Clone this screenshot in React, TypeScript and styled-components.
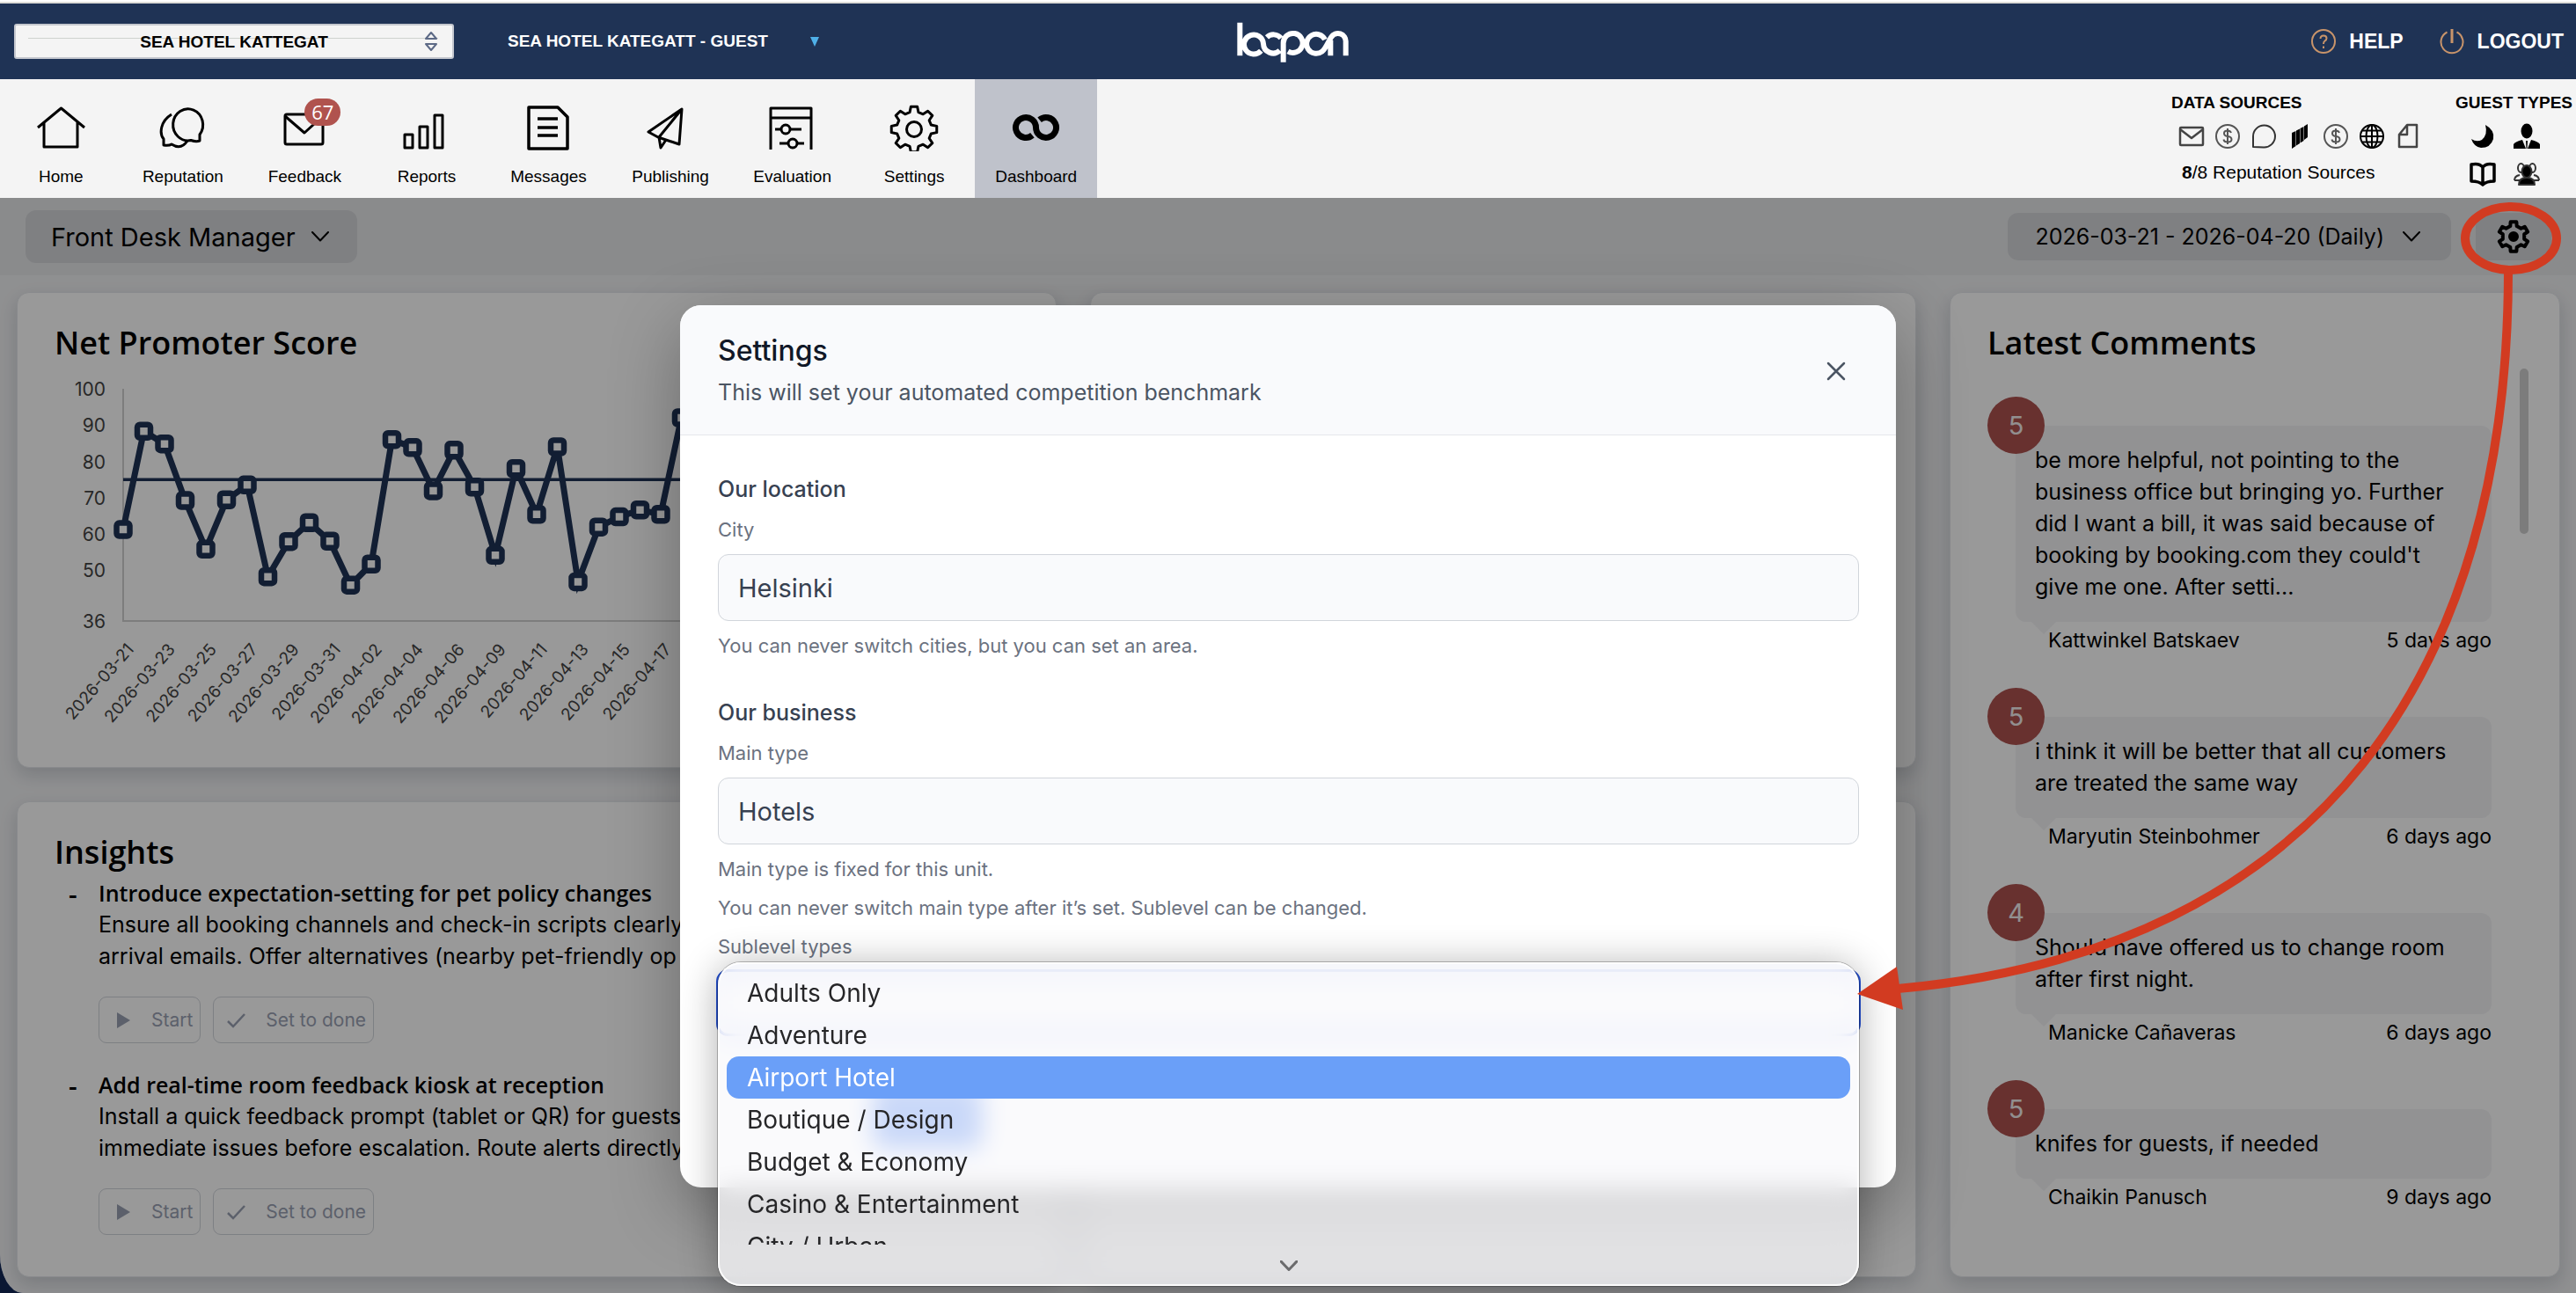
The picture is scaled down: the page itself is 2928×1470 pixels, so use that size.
import React from "react";
import styled, { createGlobalStyle } from "styled-components";

const GlobalStyle = createGlobalStyle`
  *, *::before, *::after { box-sizing: border-box; }
  body { margin: 0; background: #0a1733; }
  button, input, select { font: inherit; color: inherit; margin: 0; }
  h1, h2, h3, p, ul, ol { margin: 0; padding: 0; }
  ul, ol { list-style: none; }
`;

const ui = `Inter, "Liberation Sans", sans-serif`;
const heading = `"Open Sans", "Noto Sans", sans-serif`;
const legacy = `"Liberation Sans", Arial, sans-serif`;

const Page = styled.div`
  position: relative;
  display: flex;
  flex-direction: column;
  min-height: 100vh;
  overflow: hidden;
  font-family: ${ui};
  color: #000;
`;

/* ---------- top bar ---------- */

const TopBar = styled.header`
  display: grid;
  grid-template-columns: 1fr auto 1fr;
  align-items: center;
  height: 90px;
  padding: 4px 14px 0 16px;
  font-family: ${legacy};
  font-weight: 700;
  color: #fff;
  background: linear-gradient(#fff 2px, #deded9 2px, #deded9 4px, #1f3355 4px);
`;

const TopGroup = styled.div<{ $end?: boolean }>`
  display: flex;
  align-items: center;
  justify-content: ${(p) => (p.$end ? "flex-end" : "flex-start")};
  gap: ${(p) => (p.$end ? 40 : 61)}px;
`;

const HotelPicker = styled.label`
  position: relative;
  display: block;
  width: 500px;
  height: 40px;
  svg { position: absolute; right: 18px; top: 8px; pointer-events: none; }
`;

const HotelSelect = styled.select`
  appearance: none;
  width: 100%;
  height: 100%;
  padding: 0;
  border: 2px solid #c5c8cf;
  border-radius: 3px;
  color: #000;
  font-size: 19px;
  text-align: center;
  text-align-last: center;
  background: linear-gradient(#cfd2cf, #cfd2cf) 14px 14px / 466px 1px no-repeat #f4f4f4;
`;

const UnitButton = styled.button`
  display: flex;
  align-items: center;
  gap: 48px;
  padding: 0;
  border: 0;
  background: none;
  font-size: 19px;
  font-weight: 700;
`;

const TopLink = styled.a`
  display: flex;
  align-items: center;
  gap: 14px;
  color: #fff;
  font-size: 23px;
  text-decoration: none;
`;

/* ---------- navigation ---------- */

const NavBar = styled.div`
  display: flex;
  justify-content: space-between;
  height: 135px;
  font-family: ${legacy};
  background: #f4f4f4;
`;

const NavList = styled.nav`
  display: grid;
  grid-template-columns: repeat(9, 1fr);
  width: 1247px;
`;

const NavItem = styled.a<{ $active?: boolean }>`
  display: flex;
  flex-direction: column;
  align-items: center;
  gap: 17px;
  padding-top: 28px;
  font-size: 19px;
  line-height: 24px;
  color: #000;
  text-decoration: none;
  background: ${(p) => (p.$active ? "#bfc2cb" : "transparent")};
`;

const NavIcon = styled.span`
  position: relative;
  display: block;
  width: 56px;
  height: 54px;
`;

const NavBadge = styled.span`
  position: absolute;
  top: -6px;
  left: 28px;
  width: 41px;
  height: 31px;
  border-radius: 16px;
  font: 500 22px/31px ${heading};
  text-align: center;
  color: #fff;
  background: #b0534e;
`;

const NavInfo = styled.div`
  display: flex;
  justify-content: space-between;
  width: 460px;
  padding: 15px 4px 0 0;
`;

const InfoTitle = styled.h2`
  font-size: 19px;
  font-weight: 700;
  line-height: 24px;
  white-space: nowrap;
`;

const SourceIcons = styled.div`
  display: flex;
  gap: 9px;
  padding: 10px 0 13px 7px;
`;

const SourceText = styled.p`
  padding-left: 12px;
  font-size: 21px;
  line-height: 24px;
`;

const GuestIcons = styled.div`
  display: grid;
  grid-template-columns: 32px 32px;
  gap: 11px 18px;
  padding: 10px 0 0 15px;
`;

/* ---------- dashboard ---------- */

const Main = styled.main`
  position: relative;
  display: flex;
  flex: 1;
  flex-direction: column;
  overflow: hidden;
  background: #eff0f2;
  border-bottom-left-radius: 26px 44px;
`;

const Toolbar = styled.div`
  display: flex;
  align-items: center;
  justify-content: space-between;
  height: 88px;
  padding: 0 28px 0 29px;
  background: #e6e8e9;
`;

const ToolGroup = styled.div`
  display: flex;
  gap: 28px;
`;

const ToolButton = styled.button<{ $large?: boolean; $icon?: boolean }>`
  display: flex;
  align-items: center;
  justify-content: center;
  gap: ${(p) => (p.$large ? 18 : 21)}px;
  height: ${(p) => (p.$large ? 60 : 54)}px;
  padding: ${(p) => (p.$icon ? "0 24px" : p.$large ? "0 32px 0 29px" : "0 35px 0 31px")};
  border: 0;
  border-radius: 12px;
  font-size: ${(p) => (p.$large ? 29 : 25)}px;
  color: #000;
  background: #d4d5d9;
`;

const Cards = styled.div`
  display: grid;
  flex: 1;
  grid-template-columns: 1182fr 939fr 694fr;
  grid-template-rows: 1fr 1fr;
  gap: 38px;
  padding: 19px 18px 18px 19px;
`;

const Card = styled.section<{ $tall?: boolean }>`
  grid-row: ${(p) => (p.$tall ? "1 / span 2" : "auto")};
  grid-column: ${(p) => (p.$tall ? "3" : "auto")};
  padding: 33px 35px 0 42px;
  border: 1px solid #e5e7eb;
  border-radius: 14px;
  background: #fff;
  box-shadow: 0 8px 20px rgba(15, 23, 42, 0.16);
`;

const CardTitle = styled.h2`
  font: 600 36px/48px ${heading};
`;

const InsightList = styled.ul`
  display: grid;
  gap: 29px;
  padding-top: 4px;
`;

const Insight = styled.li`
  display: grid;
  grid-template-columns: 34px 1fr;
  padding-left: 16px;
  font-size: 25px;
  line-height: 36px;
  white-space: nowrap;
`;

const InsightMark = styled.span`
  font: 600 30px/40px ${heading};
`;

const InsightTitle = styled.h3`
  font: 600 25px/36px ${heading};
`;

const InsightActions = styled.div`
  display: flex;
  gap: 14px;
  padding-top: 28px;
`;

const ActionButton = styled.button`
  display: flex;
  align-items: center;
  gap: 19px;
  height: 53px;
  padding: 0 8px 0 14px;
  border: 1px solid #d1d5db;
  border-radius: 9px;
  font-size: 21px;
  color: #99a1b3;
  background: none;
`;

const CommentScroll = styled.div`
  display: flex;
  align-items: flex-start;
  justify-content: space-between;
  padding-top: 5px;
`;

const ScrollThumb = styled.div`
  width: 10px;
  height: 188px;
  border-radius: 5px;
  background: #cfcfcf;
`;

const CommentList = styled.ol`
  flex: 1;
  max-width: 573px;
  padding-top: 65px;
`;

const Comment = styled.li`
  position: relative;
  padding: 0 0 36px 32px;
`;

const Score = styled.span`
  position: absolute;
  top: -33px;
  left: 0;
  width: 65px;
  height: 65px;
  border-radius: 50%;
  font-size: 29px;
  line-height: 65px;
  text-align: center;
  color: #f4eeee;
  background: #ad524f;
`;

const Bubble = styled.p`
  position: relative;
  padding: 21px 44px 22px 22px;
  border-radius: 12px;
  font-size: 25px;
  line-height: 36px;
  background: #f3f3f6;
  &::after {
    content: "";
    position: absolute;
    left: 18px;
    top: 100%;
    border: 14px solid transparent;
    border-bottom: 0;
    border-top-color: #f3f3f6;
  }
`;

const CommentMeta = styled.div`
  display: flex;
  justify-content: space-between;
  height: 72px;
  padding: 3px 0 0 37px;
  font-size: 23px;
  line-height: 36px;
`;

/* ---------- modal ---------- */

const Overlay = styled.div`
  position: absolute;
  inset: 225px 0 0;
  z-index: 2;
  display: flex;
  align-items: center;
  justify-content: center;
  padding-top: 2px;
  background: rgba(0, 0, 0, 0.4);
  border-bottom-left-radius: 26px 44px;
`;

const Modal = styled.div`
  width: 100%;
  max-width: 1382px;
  border-radius: 24px;
  background: #fff;
  box-shadow: 0 25px 80px rgba(0, 0, 0, 0.3);
`;

const ModalHeader = styled.div`
  display: flex;
  align-items: center;
  justify-content: space-between;
  padding: 32px 55px 30px 43px;
  border-bottom: 1px solid #e5e7eb;
  border-radius: 24px 24px 0 0;
  background: #f9fafc;
`;

const ModalHeadings = styled.div`
  display: grid;
  gap: 9px;
`;

const ModalTitle = styled.h1`
  font-size: 32px;
  font-weight: 500;
  line-height: 40px;
  color: #111827;
`;

const ModalText = styled.p`
  font-size: 25px;
  line-height: 36px;
  color: #4b5563;
`;

const CloseButton = styled.button`
  display: flex;
  padding: 0;
  border: 0;
  color: #4b5563;
  background: none;
`;

const ModalBody = styled.form`
  display: grid;
  gap: 42px;
  padding: 43px 42px 174px 43px;
`;

const FieldSet = styled.div`
  display: grid;
  gap: 12px;
`;

const FieldTitle = styled.h2`
  font-size: 25px;
  font-weight: 500;
  line-height: 36px;
  color: #374151;
`;

const Label = styled.label`
  font-size: 22px;
  line-height: 32px;
  color: #6b7280;
`;

const Hint = styled.p`
  font-size: 22px;
  line-height: 32px;
  color: #6b7280;
`;

const TextField = styled.input`
  width: 100%;
  height: 76px;
  padding: 0 22px;
  border: 1px solid #d1d5db;
  border-radius: 12px;
  font-size: 29px;
  color: #374151;
  background: #f9fafc;
`;

const PickerWrap = styled.div`
  position: relative;
`;

const SublevelSelect = styled.select`
  appearance: none;
  display: block;
  width: 100%;
  height: 72px;
  padding: 0 22px;
  border: 1px solid #2451d6;
  border-radius: 12px;
  outline: 2px solid #2451d6;
  background: #fff;
`;

const SaveShape = styled.div`
  position: absolute;
  top: 128px;
  left: 176px;
  width: 124px;
  height: 74px;
  border-radius: 12px;
  background: #2b6bf0;
`;

const Popup = styled.div`
  position: absolute;
  top: -10px;
  left: 0;
  right: 0;
  padding: 11px 10px 0;
  border-radius: 26px;
  background: rgba(248, 248, 251, 0.77);
  backdrop-filter: blur(14px);
  box-shadow: 0 0 0 1px rgba(0, 0, 0, 0.25), inset 0 0 0 2px rgba(255, 255, 255, 0.85),
    0 4px 44px rgba(0, 0, 0, 0.32);
`;

const Options = styled.ul`
  height: 310px;
  overflow: hidden;
`;

const Option = styled.li<{ $active?: boolean }>`
  padding-left: 23px;
  border-radius: 14px;
  font-size: 28px;
  line-height: 48px;
  color: ${(p) => (p.$active ? "#fff" : "#262628")};
  background: ${(p) => (p.$active ? "#6a9ff8" : "transparent")};
`;

const MoreRow = styled.div`
  display: flex;
  align-items: center;
  justify-content: center;
  height: 47px;
  color: #6b6b6d;
`;

const Annotation = styled.svg`
  position: absolute;
  top: 225px;
  right: 0;
  z-index: 3;
  pointer-events: none;
`;

/* ---------- drawings ---------- */

const gearPath = (c: number, outer: number, inner: number, teeth: number, top: number, base: number) => {
  const pts: string[] = [];
  for (let i = 0; i < teeth; i++) {
    const mid = (i / teeth) * Math.PI * 2 - Math.PI / 2;
    [[-base, inner], [-top, outer], [top, outer], [base, inner]].forEach(([a, r]) =>
      pts.push(`${(c + Math.cos(mid + a) * r).toFixed(2)} ${(c + Math.sin(mid + a) * r).toFixed(2)}`)
    );
  }
  return `M${pts.join("L")}Z`;
};

const Draw = ({ children, w = 56, h = 54, sw = 3 }: { children: React.ReactNode; w?: number; h?: number; sw?: number }) => (
  <svg width={w} height={h} viewBox={`0 0 ${w} ${h}`} fill="none" stroke="currentColor" strokeWidth={sw}
    strokeLinejoin="round" aria-hidden="true">
    {children}
  </svg>
);

const Chevron = ({ w = 20, sw = 2 }: { w?: number; sw?: number }) => (
  <svg width={w} height="12" viewBox="0 0 20 12" fill="none" stroke="currentColor" strokeWidth={sw}
    strokeLinecap="round" strokeLinejoin="round" aria-hidden="true">
    <path d="M1 1L10 10.500L19 1" />
  </svg>
);

const Logo = () => (
  <svg width="160" height="80" viewBox="-13 -8 480 240" fill="none" stroke="#fff" strokeWidth="18" role="img" aria-label="loopon">
    <path d="M60 48V161M132 144A33 33 0 1 1 140 120A33 33 0 0 0 196 143M152 98A33 33 0 0 1 200 101M208 183V118A33 33 0 1 1 224 146M350 106A33 33 0 1 0 340 147C352 138 362 112 371 98A27 27 0 0 1 421 114V161M369 161V108" />
  </svg>
);

const navItems: { label: string; icon: React.ReactNode; badge?: string; active?: boolean }[] = [
  { label: "Home", icon: <Draw><path d="M2 27L28.500 5L55 27M9 21V49H47V21" /></Draw> },
  {
    label: "Reputation",
    icon: <Draw><path d="M47 42V35A17 18 0 1 0 37 41.500Q43 43.500 47 42Z" /><path d="M15 12C2 20 1 34 6 40V47Q12 48 15 46Q26 53 33 42" /></Draw>,
  },
  { label: "Feedback", badge: "67", icon: <Draw><rect x="6" y="12" width="43" height="34" rx="2" /><path d="M6 14L28 33L49 14" /></Draw> },
  {
    label: "Reports",
    icon: <Draw><rect x="3" y="35" width="9" height="15" /><rect x="20" y="26" width="9" height="24" /><rect x="37" y="13" width="9" height="37" /></Draw>,
  },
  { label: "Messages", icon: <Draw sw={3.5}><path d="M6 4H39L50 15V51H6ZM16 17H39M16 27H39M16 36H39" /></Draw> },
  { label: "Publishing", icon: <Draw><path d="M41 6L3 32L14 38L38 46ZM41 6L15 38L17 50L23 41" /></Draw> },
  {
    label: "Evaluation",
    icon: <Draw><path d="M3 52V5H49V52M3 16H49M8 29H15M25 29H38M13 45H23M33 45H41" /><circle cx="20" cy="29" r="5" /><circle cx="28" cy="45" r="5" /></Draw>,
  },
  {
    label: "Settings",
    icon: <Draw><path d={gearPath(28, 26, 20, 8, 0.14, 0.25)} transform="translate(0 1)" /><circle cx="28" cy="29" r="8.500" /></Draw>,
  },
  {
    label: "Dashboard",
    active: true,
    icon: <Draw sw={7}><path d="M23.400 35.800A11.500 11.500 0 1 1 27.500 27A11.500 11.500 0 1 0 31.600 18.200" /></Draw>,
  },
];

const Small = ({ children, sw = 2, color = "#333" }: { children: React.ReactNode; sw?: number; color?: string }) => (
  <svg width="32" height="32" viewBox="0 0 32 32" fill="none" stroke={color} strokeWidth={sw} strokeLinejoin="round" aria-hidden="true">
    {children}
  </svg>
);

const Dollar = () => (
  <Small sw={2} color="#555">
    <circle cx="16" cy="16" r="13" />
    <path d="M20 12Q19 9.500 16 9.500Q12 9.500 12 12.500Q12 15.500 16 16Q20.500 16.500 20.500 19.500Q20.500 22.500 16 22.500Q12 22.500 11.500 19.500M16 7V25" />
  </Small>
);

const ChartLayout = { left: 140, step: 23.5, top: 442, bottom: 706 };
const scores = [
  61.2, 88.3, 84.8, 69.2, 55.8, 69.4, 73.5, 48.2, 57.9, 63.1, 58, 45.9, 51.7, 86, 83.8, 71.9, 83.1, 72.9, 54.1, 78,
  65.4, 84, 46.8, 61.9, 64.7, 66.6, 65.4, 92, 88, 84,
];
const chartDates = [
  "2026-03-21", "2026-03-23", "2026-03-25", "2026-03-27", "2026-03-29", "2026-03-31", "2026-04-02", "2026-04-04",
  "2026-04-06", "2026-04-09", "2026-04-11", "2026-04-13", "2026-04-15", "2026-04-17",
];
const px = (i: number) => ChartLayout.left + i * ChartLayout.step;
const py = (v: number) => ChartLayout.top + ((100 - v) / 64) * (ChartLayout.bottom - ChartLayout.top);

const ChartSvg = styled.svg`
  display: block;
  font-family: ${ui};
  fill: #444;
`;

const ValueLabel = styled.text`
  font-size: 21px;
`;

const DateLabel = styled.text`
  font-size: 19px;
`;

const NpsChart = () => (
  <ChartSvg width="1060" height="430" viewBox="62 414 1060 430" role="img" aria-label="Net Promoter Score by day">
    <path d="M140 442V706H1120" fill="none" stroke="#d0d0d0" strokeWidth="2" />
    <path d={`M140 ${py(75)}H1120`} stroke="#1f3355" strokeWidth="3.500" />
    {[100, 90, 80, 70, 60, 50, 36].map((v) => (
      <ValueLabel key={v} x="120" y={py(v) + 8} textAnchor="end">{v}</ValueLabel>
    ))}
    {chartDates.map((d, i) => (
      <DateLabel key={d} textAnchor="end" transform={`translate(${px(i * 2) + 13} 739) rotate(-49)`}>{d}</DateLabel>
    ))}
    <polyline points={scores.map((v, i) => `${px(i)},${py(v)}`).join(" ")} fill="none" stroke="#1f3355" strokeWidth="7" />
    {scores.map((v, i) => (
      <rect key={i} x={px(i) - 7.5} y={py(v) - 7.5} width="15" height="15" rx="3" fill="#fff" stroke="#1f3355" strokeWidth="6.500" />
    ))}
  </ChartSvg>
);

const insights = [
  {
    title: "Introduce expectation-setting for pet policy changes",
    lines: ["Ensure all booking channels and check-in scripts clearly", "arrival emails. Offer alternatives (nearby pet-friendly op"],
  },
  {
    title: "Add real-time room feedback kiosk at reception",
    lines: ["Install a quick feedback prompt (tablet or QR) for guests", "immediate issues before escalation. Route alerts directly"],
  },
];

const comments = [
  {
    score: 5,
    text: "be more helpful, not pointing to the business office but bringing yo. Further did I want a bill, it was said because of booking by booking.com they could't give me one. After setti...",
    name: "Kattwinkel Batskaev",
    when: "5 days ago",
  },
  { score: 5, text: "i think it will be better that all customers are treated the same way", name: "Maryutin Steinbohmer", when: "6 days ago" },
  { score: 4, text: "Should have offered us to change room after first night.", name: "Manicke Cañaveras", when: "6 days ago" },
  { score: 5, text: "knifes for guests, if needed", name: "Chaikin Panusch", when: "9 days ago" },
];

const sublevels = [
  "Adults Only", "Adventure", "Airport Hotel", "Boutique / Design", "Budget & Economy", "Casino & Entertainment", "City / Urban",
];

export default function App() {
  return (
    <Page>
      <GlobalStyle />
      <TopBar>
        <TopGroup>
          <HotelPicker>
            <HotelSelect aria-label="Hotel">
              <option>SEA HOTEL KATTEGAT</option>
            </HotelSelect>
            <svg width="16" height="24" viewBox="0 0 16 24" fill="none" stroke="#5d6a86" strokeWidth="2" strokeLinejoin="round" aria-hidden="true">
              <path d="M8 2L14 9H2ZM8 22L14 15H2Z" />
            </svg>
          </HotelPicker>
          <UnitButton type="button">
            SEA HOTEL KATEGATT - GUEST
            <svg width="10" height="11" viewBox="0 0 10 11" aria-hidden="true"><path d="M0 0H10L5 11Z" fill="#4fb0e8" /></svg>
          </UnitButton>
        </TopGroup>
        <Logo />
        <TopGroup $end>
          <TopLink href="#help">
            <svg width="30" height="30" viewBox="0 0 30 30" fill="none" stroke="#c8946a" strokeWidth="2" aria-hidden="true">
              <circle cx="15" cy="15" r="13" />
              <path d="M11.500 12Q11.500 8.500 15 8.500Q18.500 8.500 18.500 11.500Q18.500 13.500 16.500 14.500Q15 15.500 15 18M15 20.500V23" />
            </svg>
            HELP
          </TopLink>
          <TopLink href="#logout">
            <svg width="30" height="30" viewBox="0 0 30 30" fill="none" stroke="#c8946a" strokeWidth="2" aria-hidden="true">
              <path d="M9.500 4.500A12.500 12.500 0 1 0 20.500 4.500" />
              <path d="M15 1V17" strokeWidth="3" />
            </svg>
            LOGOUT
          </TopLink>
        </TopGroup>
      </TopBar>

      <NavBar>
        <NavList>
          {navItems.map((n) => (
            <NavItem key={n.label} href={`#${n.label.toLowerCase()}`} $active={n.active}>
              <NavIcon>
                {n.icon}
                {n.badge && <NavBadge>{n.badge}</NavBadge>}
              </NavIcon>
              {n.label}
            </NavItem>
          ))}
        </NavList>
        <NavInfo>
          <div>
            <InfoTitle>DATA SOURCES</InfoTitle>
            <SourceIcons>
              <Small sw={2.5} color="#444"><rect x="3" y="6" width="26" height="20" rx="1" /><path d="M3 8L16 18L29 8" /></Small>
              <Dollar />
              <Small color="#333"><path d="M4 28V16A12.500 12.500 0 1 1 16 28.500Z" /></Small>
              <Small color="none">
                <path d="M7 12L11.500 10V27L7 30ZM12 9.500L16 7.500V24L12 26.500ZM16.500 7L20.500 5V21L16.500 23.500ZM21 4.500L25 2V17L21 20Z" fill="#000" />
              </Small>
              <Dollar />
              <Small color="#000">
                <circle cx="16" cy="16" r="13" /><ellipse cx="16" cy="16" rx="6.500" ry="13" /><path d="M3 16H29M16 3V29M5 9.500H27M5 22.500H27" />
              </Small>
              <Small sw={2.5} color="#444"><path d="M15 3H26V28H6V14ZM15 3V14H6" /></Small>
            </SourceIcons>
            <SourceText><b>8</b>/8 Reputation Sources</SourceText>
          </div>
          <div>
            <InfoTitle>GUEST TYPES</InfoTitle>
            <GuestIcons>
              <Small color="none"><path d="M19 3Q30 9 28 19Q25 29 14 29Q6 28 3 19Q9 23 15 20Q22 14 19 3Z" fill="#000" /></Small>
              <Small color="none">
                <ellipse cx="16" cy="10" rx="6.500" ry="8.500" fill="#000" />
                <path d="M1 30V25Q3 22 11 20L15 30ZM31 30V25Q29 22 21 20L17 30ZM15 21H17L16.500 30H15.500Z" fill="#000" />
              </Small>
              <Small sw={3.5} color="#000"><path d="M3 5Q12 3 16 8Q20 3 29 5V24Q20 24 16 28Q12 24 3 24ZM16 8V26" /></Small>
              <Small sw={2} color="#333">
                <ellipse cx="9.500" cy="9" rx="3.500" ry="5" /><ellipse cx="22.500" cy="9" rx="3.500" ry="5" />
                <path d="M2 23Q2 18 8 17M30 23Q30 18 24 17M2 23H30" />
                <ellipse cx="16" cy="13" rx="5.500" ry="7" fill="#000" /><path d="M7 28Q7 20 16 20Q25 20 25 28Z" fill="#000" />
              </Small>
            </GuestIcons>
          </div>
        </NavInfo>
      </NavBar>

      <Main>
        <Toolbar>
          <ToolButton type="button" $large>Front Desk Manager <Chevron /></ToolButton>
          <ToolGroup>
            <ToolButton type="button">2026-03-21 - 2026-04-20 (Daily) <Chevron /></ToolButton>
            <ToolButton type="button" $icon aria-label="Settings">
              <svg width="38" height="38" viewBox="0 0 38 38" fill="none" stroke="#000" strokeWidth="4" strokeLinejoin="round" aria-hidden="true">
                <path d={gearPath(19, 17, 12.5, 6, 0.2, 0.3)} /><circle cx="19" cy="19" r="4" fill="#000" />
              </svg>
            </ToolButton>
          </ToolGroup>
        </Toolbar>
        <Cards>
          <Card>
            <CardTitle>Net Promoter Score</CardTitle>
            <NpsChart />
          </Card>
          <Card />
          <Card $tall>
            <CardTitle>Latest Comments</CardTitle>
            <CommentScroll>
              <CommentList>
                {comments.map((c) => (
                  <Comment key={c.name}>
                    <Bubble>{c.text}</Bubble>
                    <Score>{c.score}</Score>
                    <CommentMeta><span>{c.name}</span><span>{c.when}</span></CommentMeta>
                  </Comment>
                ))}
              </CommentList>
              <ScrollThumb />
            </CommentScroll>
          </Card>
          <Card>
            <CardTitle>Insights</CardTitle>
            <InsightList>
              {insights.map((item) => (
                <Insight key={item.title}>
                  <InsightMark>-</InsightMark>
                  <div>
                    <InsightTitle>{item.title}</InsightTitle>
                    {item.lines.map((l) => <p key={l}>{l}</p>)}
                    <InsightActions>
                      <ActionButton type="button">
                        <svg width="26" height="20" viewBox="0 0 26 20" aria-hidden="true"><path d="M6 1L21 10L6 19Z" fill="currentColor" /></svg>
                        Start
                      </ActionButton>
                      <ActionButton type="button">
                        <svg width="26" height="20" viewBox="0 0 26 20" fill="none" stroke="currentColor" strokeWidth="2.500" aria-hidden="true">
                          <path d="M2 11L8 17L21 3" />
                        </svg>
                        Set to done
                      </ActionButton>
                    </InsightActions>
                  </div>
                </Insight>
              ))}
            </InsightList>
          </Card>
          <Card />
        </Cards>
      </Main>

      <Overlay>
        <Modal role="dialog" aria-labelledby="modal-title">
          <ModalHeader>
            <ModalHeadings>
              <ModalTitle id="modal-title">Settings</ModalTitle>
              <ModalText>This will set your automated competition benchmark</ModalText>
            </ModalHeadings>
            <CloseButton type="button" aria-label="Close">
              <svg width="26" height="26" viewBox="0 0 26 26" fill="none" stroke="currentColor" strokeWidth="2.500" strokeLinecap="round" aria-hidden="true">
                <path d="M4 4L22 22M22 4L4 22" />
              </svg>
            </CloseButton>
          </ModalHeader>
          <ModalBody>
            <FieldSet>
              <FieldTitle>Our location</FieldTitle>
              <Label htmlFor="city">City</Label>
              <TextField id="city" defaultValue="Helsinki" readOnly />
              <Hint>You can never switch cities, but you can set an area.</Hint>
            </FieldSet>
            <FieldSet>
              <FieldTitle>Our business</FieldTitle>
              <Label htmlFor="main-type">Main type</Label>
              <TextField id="main-type" defaultValue="Hotels" readOnly />
              <Hint>Main type is fixed for this unit.</Hint>
              <Hint>You can never switch main type after it’s set. Sublevel can be changed.</Hint>
              <Label htmlFor="sublevel">Sublevel types</Label>
              <PickerWrap>
                <SublevelSelect id="sublevel" />
                <SaveShape />
                <Popup>
                  <Options role="listbox" aria-label="Sublevel types">
                    {sublevels.map((s) => (
                      <Option key={s} role="option" aria-selected={s === "Airport Hotel"} $active={s === "Airport Hotel"}>{s}</Option>
                    ))}
                  </Options>
                  <MoreRow><Chevron sw={3} /></MoreRow>
                </Popup>
              </PickerWrap>
            </FieldSet>
          </ModalBody>
        </Modal>
      </Overlay>

      <Annotation width="840" height="940" viewBox="2088 225 840 940" fill="none" stroke="#d23b21" strokeWidth="10" aria-hidden="true">
        <ellipse cx="2854" cy="271" rx="52" ry="36" />
        <path d="M2851 308C2851 760 2640 1080 2157 1124" />
        <path d="M2111 1130L2156 1099L2163 1148Z" fill="#d23b21" stroke="none" />
      </Annotation>
    </Page>
  );
}
